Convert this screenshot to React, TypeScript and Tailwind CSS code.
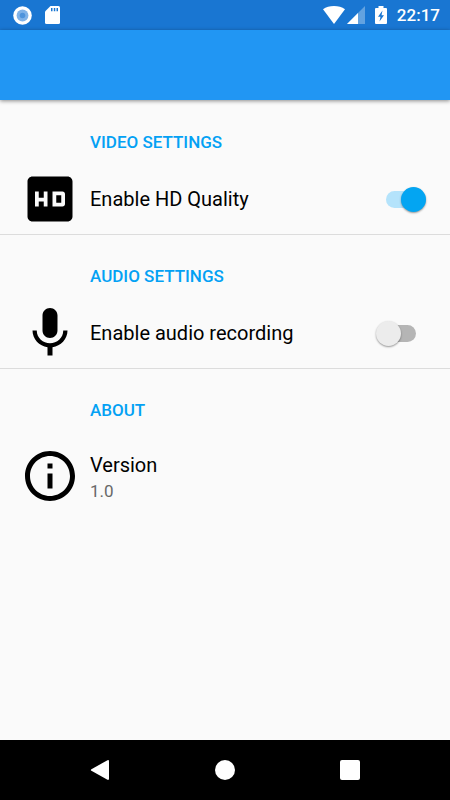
import { useState } from 'react';
import type { ReactNode } from 'react';

type IconProps = { className?: string };

function HdIcon({ className }: IconProps) {
  return (
    <svg viewBox="0 0 24 24" fill="currentColor" className={className} aria-hidden="true">
      <path d="M19 3H5c-1.11 0-2 .89-2 2v14c0 1.1.89 2 2 2h14c1.1 0 2-.9 2-2V5c0-1.11-.9-2-2-2zm-8 12H9.500v-2h-2v2H6V9h1.500v2.500h2V9H11v6zm2-6h4c.55 0 1 .45 1 1v4c0 .55-.45 1-1 1h-4V9zm1.500 4.500h2v-3h-2v3z" />
    </svg>
  );
}

function MicIcon({ className }: IconProps) {
  return (
    <svg viewBox="0 0 24 24" fill="currentColor" className={className} aria-hidden="true">
      <path d="M12 14c1.660 0 2.990-1.340 2.990-3L15 5c0-1.660-1.340-3-3-3S9 3.340 9 5v6c0 1.660 1.340 3 3 3zm5.300-3c0 3-2.540 5.100-5.300 5.100S6.700 14 6.700 11H5c0 3.410 2.720 6.230 6 6.720V21h2v-3.280c3.280-.48 6-3.300 6-6.720h-1.700z" />
    </svg>
  );
}

function InfoIcon({ className }: IconProps) {
  return (
    <svg viewBox="0 0 24 24" fill="currentColor" className={className} aria-hidden="true">
      <path d="M11 17h2v-6h-2v6zm1-15C6.480 2 2 6.480 2 12s4.480 10 10 10 10-4.480 10-10S17.520 2 12 2zm0 18c-4.410 0-8-3.590-8-8s3.590-8 8-8 8 3.590 8 8-3.590 8-8 8zM11 9h2V7h-2v2z" />
    </svg>
  );
}

function StatusBar() {
  return (
    <div className="flex h-[30px] items-center justify-between bg-[#1976d2] pr-2.5 pl-[13px] text-white">
      <div className="flex items-center gap-[13px]">
        <svg viewBox="0 0 19 19" className="size-[19px]" aria-hidden="true">
          <circle cx="9.5" cy="9.5" r="9.3" fill="#fff" />
          <circle cx="9.5" cy="9.5" r="5.9" fill="#7fb2e8" />
          <circle cx="9.5" cy="9.5" r="2.8" fill="#4d93dc" />
        </svg>
        <svg viewBox="0 0 15 18" className="h-[18px] w-[15px]" aria-hidden="true">
          <path d="M5.500 0H13.500Q15 0 15 1.500V16.500Q15 18 13.500 18H1.500Q0 18 0 16.500V5.500z" fill="#fff" />
          <path d="M6 2h1.500v3.300H6zM8.800 2h1.500v3.300H8.800zM11.500 2H13v3.300h-1.500z" fill="#1976d2" />
        </svg>
      </div>
      <div className="flex items-center">
        <svg viewBox="0 0 22 18" className="h-[18px] w-[22px]" aria-hidden="true">
          <path d="M11 18 0 3.200C3 1 6.800 0 11 0s8 1 11 3.200z" fill="#fff" />
        </svg>
        <svg viewBox="0 0 18 18" className="ml-0.5 size-[18px]" aria-hidden="true">
          <path d="M0 18 18 0v18z" fill="#fff" fillOpacity=".32" />
          <path d="M0 18 11 7v11z" fill="#fff" />
        </svg>
        <svg viewBox="0 0 12 18" className="ml-2.5 h-[18px] w-3" aria-hidden="true">
          <path d="M3.500 0h5v2H11q1 0 1 1v14q0 1-1 1H1q-1 0-1-1V3q0-1 1-1h2.500z" fill="#fff" />
          <path d="M7.500 4.500 3 10.700h2.500L4.500 15.500 9 9.200H6.500z" fill="#1976d2" />
        </svg>
        <time className="ml-2.5 text-[17px] leading-5 font-medium">22:17</time>
      </div>
    </div>
  );
}

function SectionTitle({ children }: { children: ReactNode }) {
  return <h2 className="pt-[31px] pr-6 pb-3 pl-[90px] text-[17px] leading-5 font-medium text-[#03a1f4]">{children}</h2>;
}

type SwitchRowProps = {
  id: string;
  label: string;
  icon: ReactNode;
  defaultOn?: boolean;
};

function SwitchRow({ id, label, icon, defaultOn = false }: SwitchRowProps) {
  const [on, setOn] = useState(defaultOn);

  return (
    <div className="flex h-[71px] items-center gap-2.5 border-b border-[#dcdcdc] pr-6 pl-5">
      {icon}
      <label htmlFor={id} className="flex-1 text-[20px] leading-6">
        {label}
      </label>
      <input
        id={id}
        type="checkbox"
        role="switch"
        checked={on}
        onChange={(e) => setOn(e.target.checked)}
        className="relative h-[25px] w-[50px] shrink-0 cursor-pointer appearance-none before:absolute before:inset-x-2.5 before:inset-y-1 before:rounded-full before:bg-[#b5b5b5] after:absolute after:top-0 after:left-0 after:size-[25px] after:rounded-full after:bg-[#ececec] after:shadow-[0_1px_2px_rgba(0,0,0,0.4)] after:transition-transform checked:before:bg-[#b4e3fb] checked:after:translate-x-[25px] checked:after:bg-[#03a5f2]"
      />
    </div>
  );
}

function NavBar() {
  return (
    <nav className="flex h-[60px] bg-black px-[37px] text-white">
      <button type="button" aria-label="Back" className="flex flex-1 items-center justify-center">
        <svg viewBox="0 0 20 20" className="size-5" fill="currentColor" aria-hidden="true">
          <path d="M1.400 9.200 17.500.2Q19 -.3 19 1.200V18.800Q19 20.300 17.500 19.800L1.400 10.800Q.2 10 1.400 9.200z" />
        </svg>
      </button>
      <button type="button" aria-label="Home" className="flex flex-1 items-center justify-center">
        <span className="size-5 rounded-full bg-white" />
      </button>
      <button type="button" aria-label="Recent apps" className="flex flex-1 items-center justify-center">
        <span className="size-5 rounded-xs bg-white" />
      </button>
    </nav>
  );
}

export default function App() {
  return (
    <div className="flex min-h-screen flex-col bg-[#fafafa] font-[Roboto,sans-serif] text-black">
      <StatusBar />
      <header className="h-[70px] bg-[#2196f3] shadow-[0_1px_4px_rgba(0,0,0,0.45)]" />

      <main className="flex-1 pt-px">
        <section>
          <SectionTitle>VIDEO SETTINGS</SectionTitle>
          <SwitchRow id="hd" label="Enable HD Quality" icon={<HdIcon className="size-[60px]" />} defaultOn />
        </section>

        <section>
          <SectionTitle>AUDIO SETTINGS</SectionTitle>
          <SwitchRow id="audio" label="Enable audio recording" icon={<MicIcon className="size-[60px]" />} />
        </section>

        <section>
          <SectionTitle>ABOUT</SectionTitle>
          <div className="flex h-[88px] items-center gap-2.5 pr-6 pl-5">
            <InfoIcon className="size-[60px]" />
            <div className="pt-1.5">
              <p className="text-[20px] leading-6">Version</p>
              <p className="text-[17px] leading-7 text-[#686868]">1.0</p>
            </div>
          </div>
        </section>
      </main>

      <NavBar />
    </div>
  );
}
